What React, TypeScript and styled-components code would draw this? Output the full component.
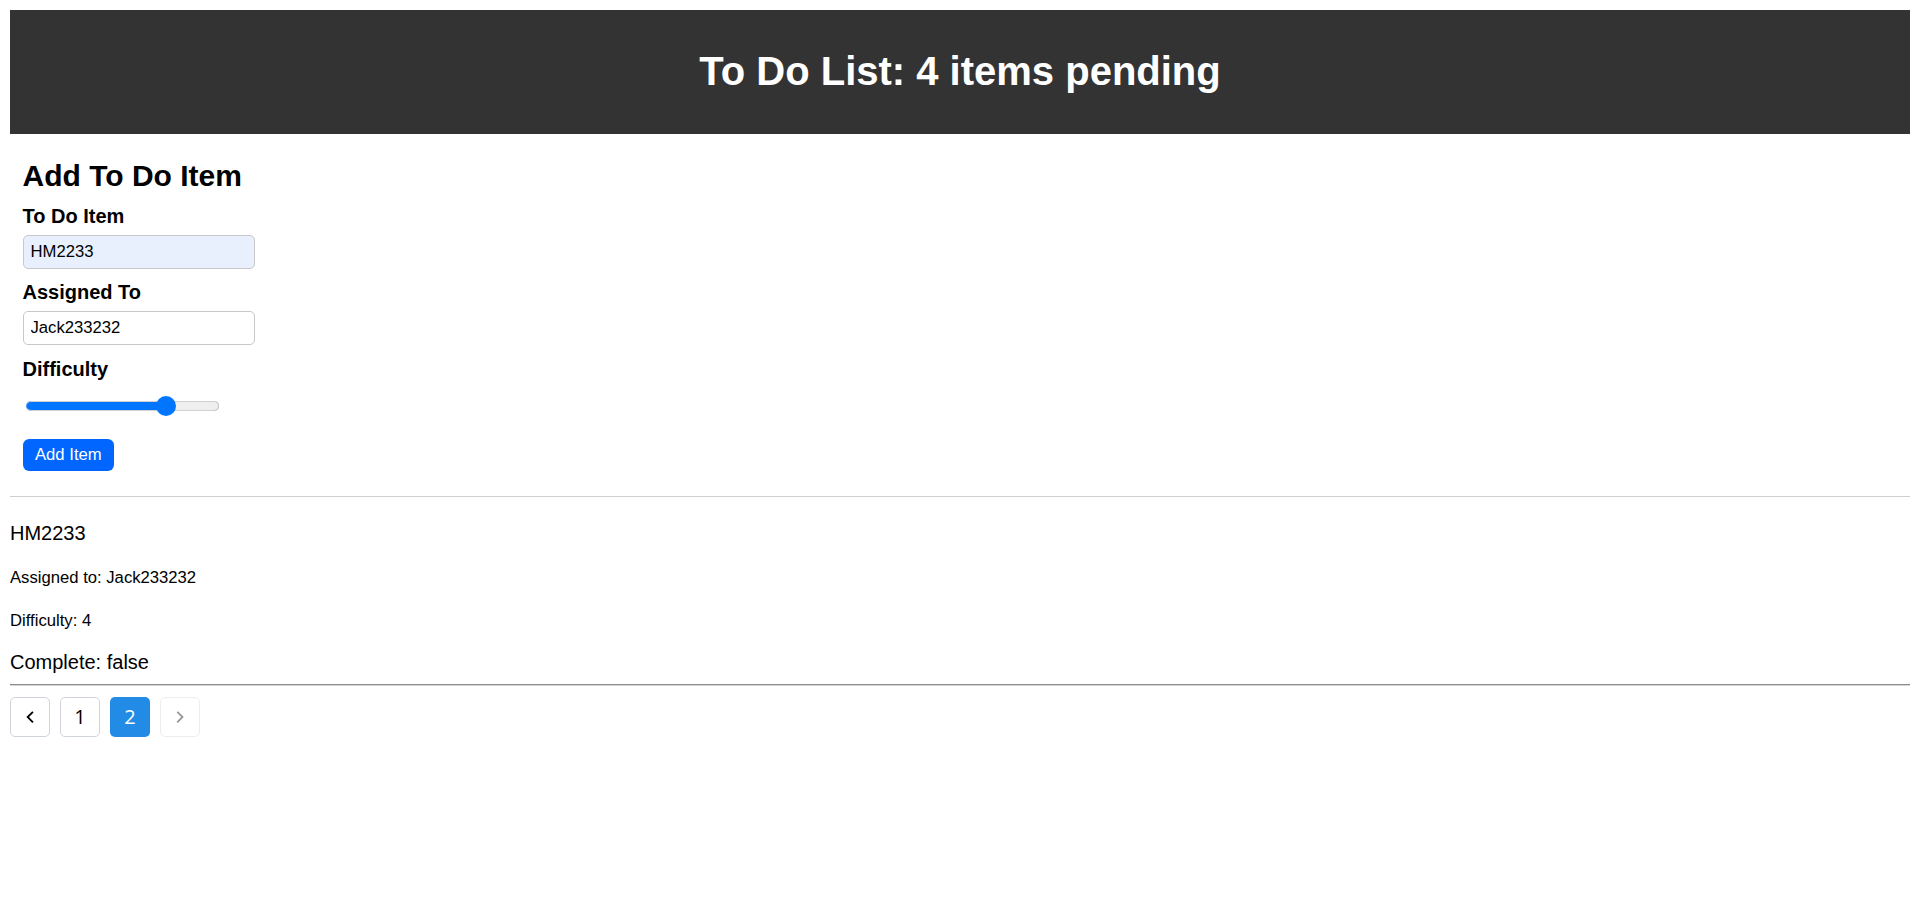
import React, { useState } from "react";
import styled, { createGlobalStyle } from "styled-components";

const GlobalStyle = createGlobalStyle`
  html, body { background: #fff; }
  body {
    margin: 10px;
    font-family: "Liberation Sans", Arial, sans-serif;
    color: #000;
  }
  * { box-sizing: border-box; }
`;

const Header = styled.header`
  background: #333333;
  padding: 12.5px;
  text-align: center;
`;

const Title = styled.h1`
  margin: 26.8px 0;
  font-size: 40px;
  font-weight: 700;
  line-height: normal;
  color: #ffffff;
`;

const Form = styled.form`
  display: flex;
  flex-direction: column;
  align-items: flex-start;
  padding: 0 12.5px;
`;

const FormTitle = styled.h2`
  margin: 25.5px 0 11.8px;
  font-size: 30px;
  font-weight: 700;
  line-height: normal;
`;

const Label = styled.label`
  display: block;
  font-size: 20px;
  font-weight: 700;
  line-height: 23px;
  margin-bottom: 7px;
`;

const TextInput = styled.input<{ $filled?: boolean }>`
  width: 232px;
  height: 34px;
  margin: 0 0 12.5px;
  padding: 6.25px 7px;
  border: 1px solid #c8c8c8;
  border-radius: 5px;
  background: ${(p) => (p.$filled ? "#e8f0fe" : "#ffffff")};
  font-family: "Liberation Sans", Arial, sans-serif;
  font-size: 16.67px;
  color: #000;
  outline: none;
`;

const Slider = styled.input`
  -webkit-appearance: none;
  appearance: none;
  width: 193px;
  height: 20px;
  margin: 8.4px 0 0 3.5px;
  padding: 0;
  background: transparent;

  &::-webkit-slider-runnable-track {
    height: 10px;
    border-radius: 5px;
    background: linear-gradient(
      to right,
      #0075ff 0,
      #0075ff var(--fill),
      #efefef var(--fill),
      #efefef 100%
    );
    box-shadow: inset -1px 0 0 #c4c4c4, inset 0 1px 0 #d0d0d0, inset 0 -1px 0 #d0d0d0;
  }

  &::-webkit-slider-thumb {
    -webkit-appearance: none;
    appearance: none;
    width: 20px;
    height: 20px;
    margin-top: -5px;
    border-radius: 50%;
    background: #0075ff;
    border: none;
  }
`;

const SubmitButton = styled.button`
  margin-top: 22.5px;
  padding: 6.25px 12.5px;
  border: none;
  border-radius: 6.25px;
  background: #0066ff;
  color: #ffffff;
  font-family: "Liberation Sans", Arial, sans-serif;
  font-size: 16.67px;
  line-height: normal;
  cursor: pointer;
`;

const Rule = styled.hr<{ $dark?: boolean }>`
  margin: ${(p) => (p.$dark ? "10.3px 0 0" : "25px 0 0")};
  height: 0;
  border: none;
  border-top: 1px solid ${(p) => (p.$dark ? "#8c8c8c" : "#cfcfcf")};
  border-bottom: ${(p) => (p.$dark ? "1px solid #d6d6d6" : "none")};
`;

const ItemCard = styled.div`
  display: flex;
  flex-direction: column;
`;

const ItemText = styled.p<{ $gap: number }>`
  margin: ${(p) => p.$gap}px 0 0;
  font-size: 20px;
  line-height: 23px;
`;

const ItemMeta = styled.p`
  margin: 22.9px 0 0;
  font-size: 16.67px;
  line-height: normal;
`;

const Pagination = styled.nav`
  display: flex;
  gap: 10px;
  margin-top: 10.7px;
`;

const PageControl = styled.button<{ $active?: boolean }>`
  display: flex;
  align-items: center;
  justify-content: center;
  width: 40px;
  height: 40px;
  padding: 0;
  border: 1px solid ${(p) => (p.$active ? "transparent" : "#ced4da")};
  border-radius: 5px;
  background: ${(p) => (p.$active ? "#228be6" : "#ffffff")};
  color: ${(p) => (p.$active ? "#ffffff" : "#000000")};
  font-family: "Open Sans", "Noto Sans", sans-serif;
  font-size: 20px;
  line-height: 1;
  cursor: pointer;

  &:disabled {
    opacity: 0.4;
    cursor: not-allowed;
  }
`;

const ChevronIcon = styled.svg`
  width: 22.2px;
  height: 22.2px;
`;

const PrevIcon = () => (
  <ChevronIcon viewBox="0 0 16 16" xmlns="http://www.w3.org/2000/svg">
    <path
      d="M7.219 8l3.3 3.3-.943.943L5.333 8l4.243-4.243.943.943-3.3 3.3z"
      fill="currentColor"
    />
  </ChevronIcon>
);

const NextIcon = () => (
  <ChevronIcon viewBox="0 0 16 16" xmlns="http://www.w3.org/2000/svg">
    <path
      d="M8.781 8l-3.3-3.3.943-.943L10.667 8l-4.243 4.243-.943-.943 3.3-3.3z"
      fill="currentColor"
    />
  </ChevronIcon>
);

export default function App() {
  const [text, setText] = useState("HM2233");
  const [assignee, setAssignee] = useState("Jack233232");
  const [difficulty, setDifficulty] = useState(4);
  const min = 1;
  const max = 5;
  const width = 193;
  const frac = (difficulty - min) / (max - min);
  const fill = ((10 + frac * (width - 20)) / width) * 100;

  return (
    <>
      <GlobalStyle />
      <Header>
        <Title>To Do List: 4 items pending</Title>
      </Header>

      <Form onSubmit={(e) => e.preventDefault()}>
        <FormTitle>Add To Do Item</FormTitle>
        <Label htmlFor="todo-text">To Do Item</Label>
        <TextInput
          id="todo-text"
          $filled
          value={text}
          onChange={(e) => setText(e.target.value)}
        />
        <Label htmlFor="todo-assignee">Assigned To</Label>
        <TextInput
          id="todo-assignee"
          value={assignee}
          onChange={(e) => setAssignee(e.target.value)}
        />
        <Label htmlFor="todo-difficulty">Difficulty</Label>
        <Slider
          id="todo-difficulty"
          type="range"
          min={min}
          max={max}
          step={1}
          value={difficulty}
          onChange={(e) => setDifficulty(Number(e.target.value))}
          style={{ ["--fill" as string]: `${fill}%` } as React.CSSProperties}
        />
        <SubmitButton type="submit">Add Item</SubmitButton>
      </Form>

      <Rule />

      <ItemCard>
        <ItemText $gap={25}>HM2233</ItemText>
        <ItemMeta>Assigned to: Jack233232</ItemMeta>
        <ItemMeta>Difficulty: 4</ItemMeta>
        <ItemText $gap={19.8}>Complete: false</ItemText>
        <Rule $dark />
      </ItemCard>

      <Pagination>
        <PageControl aria-label="previous page">
          <PrevIcon />
        </PageControl>
        <PageControl>1</PageControl>
        <PageControl $active>2</PageControl>
        <PageControl disabled aria-label="next page">
          <NextIcon />
        </PageControl>
      </Pagination>
    </>
  );
}
